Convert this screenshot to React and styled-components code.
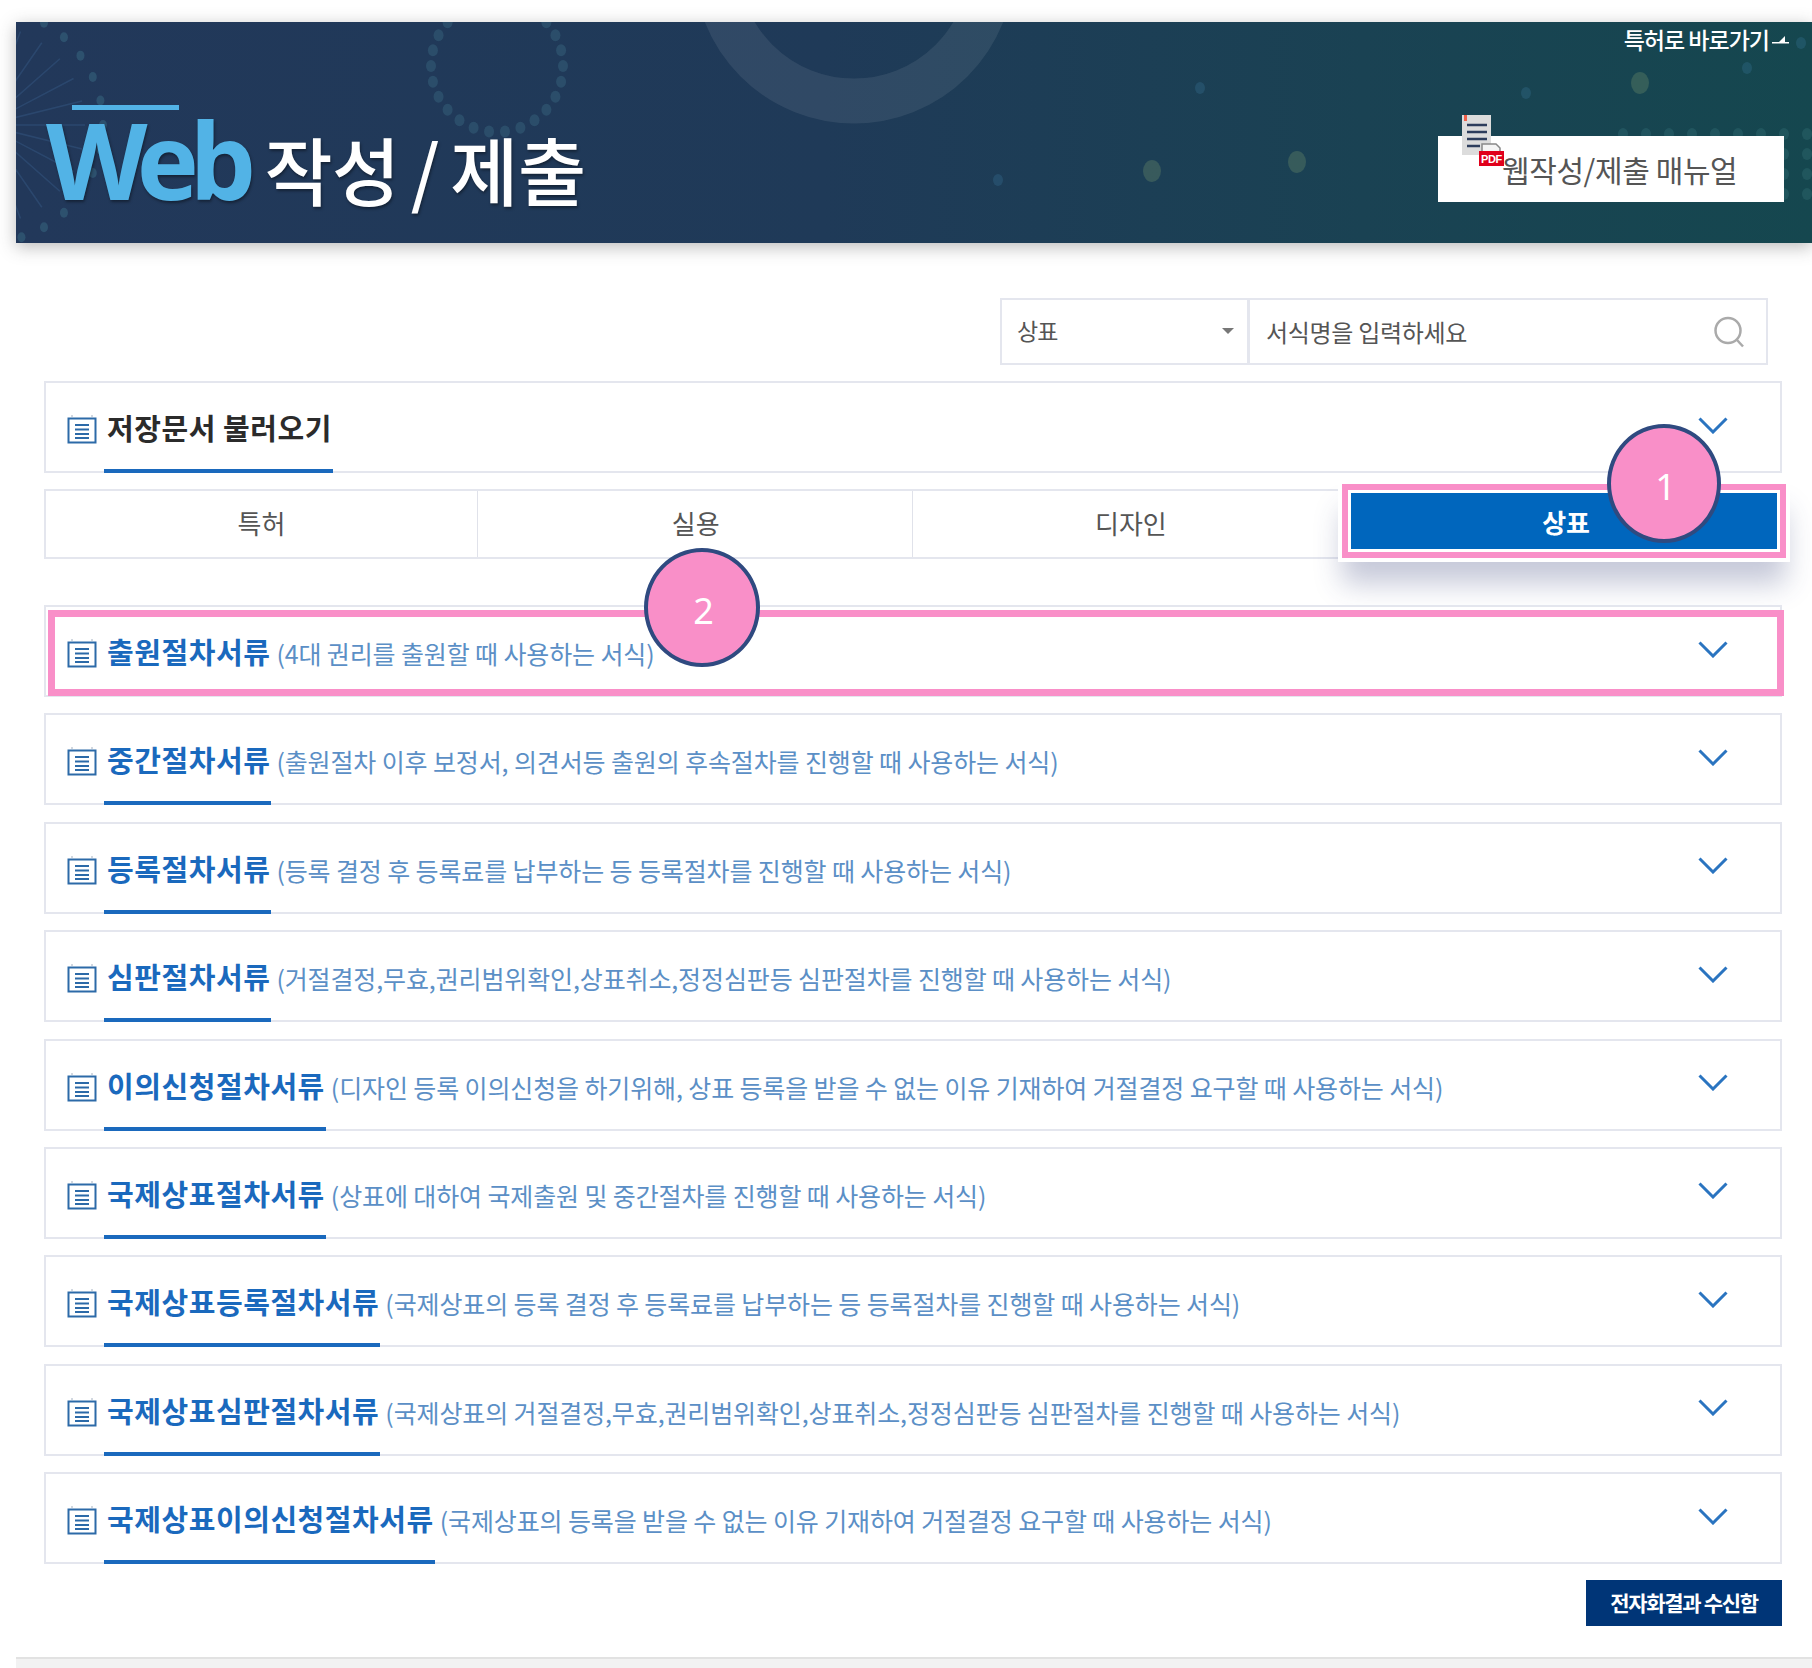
import React from 'react'
import styled, { createGlobalStyle } from 'styled-components'

const Global = createGlobalStyle`
  html, body {
    margin: 0;
    padding: 0;
    background: #fff;
  }
  body {
    font-family: "Noto Sans CJK KR", "Noto Sans", sans-serif;
  }
`

const Page = styled.div`
  width: 1812px;
  height: 1668px;
  padding: 22px 0 0 16px;
  box-sizing: border-box;
  overflow: hidden;
  display: flex;
  flex-direction: column;
`

const Banner = styled.header`
  position: relative;
  height: 221px;
  flex: none;
  background: linear-gradient(90deg, #22385a 0%, #1f3a58 45%, #1a4253 75%, #15474f 100%);
  box-shadow: 0 4px 16px rgba(60, 60, 60, 0.35);
  overflow: hidden;
  display: flex;
  justify-content: space-between;
`

const Decor = styled.svg`
  position: absolute;
  left: 0;
  top: 0;
`

const Heading = styled.h1`
  position: relative;
  margin: 83px 0 0 30px;
  display: flex;
  align-items: baseline;
  height: 110px;
  font-weight: 500;
  line-height: 110px;

  &::before {
    content: "";
    position: absolute;
    left: 26px;
    top: 0;
    width: 107px;
    height: 5px;
    background: #52b3e6;
  }
`

const Web = styled.span`
  font-family: "Noto Sans", sans-serif;
  font-size: 105px;
  font-weight: 700;
  letter-spacing: -9px;
  color: #52b3e6;
  text-shadow: 1px 2px 3px rgba(0, 0, 0, 0.4);
`

const HeadingText = styled.span`
  margin-left: 17px;
  font-size: 74px;
  font-weight: 500;
  letter-spacing: -0.5px;
  word-spacing: -5px;
  color: #fff;
  text-shadow: 1px 2px 3px rgba(0, 0, 0, 0.4);
`

const BannerSide = styled.div`
  position: relative;
  width: 346px;
  margin-right: 28px;
  display: flex;
  flex-direction: column;
  align-items: flex-end;
`

const PatentLink = styled.a`
  display: flex;
  align-items: center;
  gap: 3px;
  margin: 2px -6px 2px 0;
  height: 30px;
  font-size: 23px;
  font-weight: 500;
  letter-spacing: -1px;
  color: #fff;
`

const ManualButton = styled.a`
  position: relative;
  margin-top: 80px;
  width: 346px;
  height: 66px;
  box-sizing: border-box;
  padding-left: 64px;
  background: #fff;
  display: flex;
  align-items: center;
  font-size: 30px;
  letter-spacing: -0.4px;
  color: #555;
`

const ManualIcon = styled.svg`
  position: absolute;
  left: 24px;
  top: -21px;
`

const Main = styled.main`
  padding: 55px 30px 0 28px;
  display: flex;
  flex-direction: column;
`

const SearchBar = styled.div`
  align-self: flex-end;
  margin-right: 14px;
  width: 768px;
  height: 67px;
  box-sizing: border-box;
  border: 2px solid #e4e6ee;
  display: flex;
  margin-bottom: 16px;
`

const SelectBox = styled.div`
  position: relative;
  width: 248px;
  box-sizing: border-box;
  padding: 0 0 4px 15px;
  border-right: 3px solid #e4e6ee;
  display: flex;
  align-items: center;
  font-size: 23px;
  letter-spacing: -1px;
  color: #555;

  &::after {
    content: "";
    position: absolute;
    right: 13px;
    top: 28px;
    border-left: 6px solid transparent;
    border-right: 6px solid transparent;
    border-top: 6px solid #777;
  }
`

const SearchInput = styled.div`
  flex: 1;
  padding: 0 21px 0 16px;
  display: flex;
  align-items: center;
  justify-content: space-between;
  font-size: 24px;
  letter-spacing: -0.3px;
  color: #555;
`

const Row = styled.div`
  position: relative;
  height: 92px;
  box-sizing: border-box;
  border: 2px solid #e4e6ee;
  padding: 0 52px 0 21px;
  display: flex;
  align-items: stretch;
  background: #fff;
`

const DocIcon = styled.svg`
  flex: none;
  align-self: center;
  margin: 4px 7px 0 0;
`

const Title = styled.div`
  flex: none;
  margin-bottom: -2px;
  padding: 2px 1px 0 3px;
  border-bottom: 4px solid ${(p) => (p.$plain ? 'transparent' : '#1a69bd')};
  display: flex;
  align-items: center;
  font-size: 29px;
  font-weight: 700;
  letter-spacing: 0.55px;
  color: ${(p) => (p.$dark ? '#2b2b2b' : '#1a69bd')};
`

const Desc = styled.div`
  margin-left: 5px;
  padding-top: 4px;
  display: flex;
  align-items: center;
  font-size: 25px;
  letter-spacing: -0.12px;
  color: #5b8fc6;
`

const Chevron = styled.svg`
  margin: 0 0 4px auto;
  align-self: center;
  flex: none;
`

const Tabs = styled.div`
  position: relative;
  margin-top: 16px;
  height: 70px;
  box-sizing: border-box;
  border: 2px solid #e4e6ee;
  display: grid;
  grid-template-columns: 432px 434.5px 1fr 1fr;
`

const Tab = styled.div`
  position: relative;
  padding: 0 0 4px ${(p) => p.$shift || 0}px;
  display: flex;
  align-items: center;
  justify-content: center;
  font-size: 26px;
  letter-spacing: 0;
  color: #555;
  border-right: ${(p) => (p.$last ? '0' : '1px solid #e0e2ea')};
`

const ActiveTab = styled.div`
  position: absolute;
  top: -7px;
  right: -6px;
  bottom: -1px;
  left: -4px;
  box-sizing: border-box;
  border: 6px solid #f98fc8;
  outline: 4px solid #fff;
  background: #fff;
  box-shadow: 0 26px 28px rgba(50, 60, 120, 0.28);
  padding: 3px;
  display: flex;
`

const ActiveFill = styled.div`
  flex: 1;
  padding-left: 4px;
  background: #0066bd;
  color: #fff;
  font-weight: 700;
  display: flex;
  align-items: center;
  justify-content: center;
  font-size: 26px;
`

const List = styled.div`
  margin-top: 46px;
  display: flex;
  flex-direction: column;
  gap: 16.4px;
`

const RowHighlight = styled.div`
  position: absolute;
  top: 3px;
  right: -4px;
  bottom: -1px;
  left: 2px;
  border: 7px solid #f98fc8;
`

const Badge = styled.div`
  position: absolute;
  width: ${(p) => p.$w}px;
  height: 119px;
  box-sizing: border-box;
  padding: 5px 0 0 3px;
  border: 4px solid #2f4a80;
  border-radius: 50%;
  background: #f98fc8;
  color: #fff;
  font-family: "Noto Sans", sans-serif;
  font-size: 36px;
  display: flex;
  align-items: center;
  justify-content: center;
  z-index: 2;
`

const Badge1 = styled(Badge)`
  top: -67px;
  right: 59px;
`

const Badge2 = styled(Badge)`
  top: -59px;
  left: 598px;
`

const Actions = styled.div`
  margin-top: 16px;
  display: flex;
  justify-content: flex-end;
`

const ResultButton = styled.button`
  width: 196px;
  height: 46px;
  border: 0;
  padding: 0 0 2px;
  background: #003577;
  color: #fff;
  font-family: inherit;
  font-size: 21px;
  font-weight: 700;
  letter-spacing: -1.3px;
`

const Footer = styled.footer`
  margin-top: 31px;
  height: 11px;
  flex: none;
  background: #f2f2f2;
  border-top: 2px solid #e2e2e2;
`

const forms = [
  ['출원절차서류', '(4대 권리를 출원할 때 사용하는 서식)'],
  ['중간절차서류', '(출원절차 이후 보정서, 의견서등 출원의 후속절차를 진행할 때 사용하는 서식)'],
  ['등록절차서류', '(등록 결정 후 등록료를 납부하는 등 등록절차를 진행할 때 사용하는 서식)'],
  ['심판절차서류', '(거절결정,무효,권리범위확인,상표취소,정정심판등 심판절차를 진행할 때 사용하는 서식)'],
  ['이의신청절차서류', '(디자인 등록 이의신청을 하기위해, 상표 등록을 받을 수 없는 이유 기재하여 거절결정 요구할 때 사용하는 서식)'],
  ['국제상표절차서류', '(상표에 대하여 국제출원 및 중간절차를 진행할 때 사용하는 서식)'],
  ['국제상표등록절차서류', '(국제상표의 등록 결정 후 등록료를 납부하는 등 등록절차를 진행할 때 사용하는 서식)'],
  ['국제상표심판절차서류', '(국제상표의 거절결정,무효,권리범위확인,상표취소,정정심판등 심판절차를 진행할 때 사용하는 서식)'],
  ['국제상표이의신청절차서류', '(국제상표의 등록을 받을 수 없는 이유 기재하여 거절결정 요구할 때 사용하는 서식)'],
]

const Doc = () => (
  <DocIcon width="30" height="30" viewBox="0 0 30 30" fill="none">
    <path d="M1.5 4.5h27v24h-27z" stroke="#2c6aa8" strokeWidth="2" />
    <path d="M8 11h14M8 15.5h14M8 20h14M8 24h14" stroke="#2c6aa8" strokeWidth="1.8" />
    <path d="M5 1v2M25 1v2" stroke="#c4ccd6" strokeWidth="1.5" />
  </DocIcon>
)

const Down = () => (
  <Chevron width="30" height="17" viewBox="0 0 30 17" fill="none">
    <path d="M1.5 1.5L15 15L28.5 1.5" stroke="#2a74c0" strokeWidth="3" />
  </Chevron>
)

const ring = (cx, cy, r, n) =>
  Array.from({ length: n }, (_, i) => {
    const a = (i / n) * Math.PI * 2
    return [cx + r * Math.cos(a), cy + r * Math.sin(a)]
  })

const BannerDecor = () => (
  <Decor width="1796" height="221" viewBox="0 0 1796 221">
    <circle cx="838" cy="-59" r="138" fill="none" stroke="#fff" strokeOpacity="0.08" strokeWidth="45" />
    {Array.from({ length: 26 }, (_, i) => {
      const a = (i / 26) * Math.PI * 2
      return (
        <line
          key={i}
          x1={-31}
          y1={103}
          x2={-31 + 100 * Math.cos(a)}
          y2={103 + 100 * Math.sin(a)}
          stroke="#3a5f8c"
          strokeOpacity="0.4"
          strokeWidth="1.5"
        />
      )
    })}
    {ring(-31, 103, 118, 30).map(([x, y], i) => (
      <ellipse key={i} cx={x} cy={y} rx="4" ry="5" fill="#4a8ca0" fillOpacity="0.3" />
    ))}
    {ring(481, 44, 66, 26).map(([x, y], i) => (
      <ellipse key={i} cx={x} cy={y} rx="5" ry="6" fill="#4a8ca0" fillOpacity="0.25" />
    ))}
    {[[1184, 66], [1510, 71], [1731, 46], [1785, 21], [982, 158]].map(([x, y], i) => (
      <ellipse key={i} cx={x} cy={y} rx="5" ry="6" fill="#3f7fa8" fillOpacity="0.25" />
    ))}
    {[[1624, 61], [1136, 149], [1281, 140]].map(([x, y], i) => (
      <ellipse key={i} cx={x} cy={y} rx="9" ry="11" fill="#6d8c6a" fillOpacity="0.35" />
    ))}
    {[112, 132, 152, 172].flatMap((y) =>
      [1607, 1630, 1653, 1676, 1699, 1722, 1745, 1768, 1791].map((x) => (
        <ellipse key={x + '-' + y} cx={x} cy={y} rx="5" ry="6" fill="#4a8f90" fillOpacity="0.22" />
      ))
    )}
  </Decor>
)

const App = () => (
  <Page>
    <Global />
    <Banner>
      <BannerDecor />
      <Heading>
        <Web>Web</Web>
        <HeadingText>작성 / 제출</HeadingText>
      </Heading>
      <BannerSide>
        <PatentLink>
          특허로 바로가기
          <svg width="18" height="10" viewBox="0 0 18 10">
            <path d="M0 8h17v1.5H0z" fill="#fff" />
            <path d="M7 8l6-6v6z" fill="#fff" />
          </svg>
        </PatentLink>
        <ManualButton>
          <ManualIcon width="44" height="52" viewBox="0 0 44 52">
            <rect x="0" y="0" width="29" height="40" fill="#dcdcdc" />
            <rect x="2" y="0" width="3" height="6" fill="#f0604a" />
            <path d="M5 10h20M5 17h20M5 24h20M5 31h13" stroke="#2d3d5c" strokeWidth="2.5" />
            <path d="M20 29h14l4 4v17H20z" fill="#f4f4f4" stroke="#888" strokeWidth="1.5" />
            <rect x="17" y="36" width="25" height="15" fill="#e0001b" />
            <text x="29.5" y="48" textAnchor="middle" fontFamily="Liberation Sans, sans-serif" fontSize="11" fontWeight="700" fill="#fff">PDF</text>
          </ManualIcon>
          웹작성/제출 매뉴얼
        </ManualButton>
      </BannerSide>
    </Banner>
    <Main>
      <SearchBar>
        <SelectBox>상표</SelectBox>
        <SearchInput>
          서식명을 입력하세요
          <svg width="32" height="32" viewBox="0 0 32 32" fill="none">
            <circle cx="15" cy="14.5" r="12.5" stroke="#aaa" strokeWidth="2.5" />
            <path d="M24 24l6 6.5" stroke="#aaa" strokeWidth="2.5" />
          </svg>
        </SearchInput>
      </SearchBar>
      <Row>
        <Doc />
        <Title $dark>저장문서 불러오기</Title>
        <Down />
      </Row>
      <Tabs>
        <Tab>특허</Tab>
        <Tab $shift={2}>실용</Tab>
        <Tab $shift={4}>디자인</Tab>
        <Tab $last>
          <ActiveTab>
            <ActiveFill>상표</ActiveFill>
          </ActiveTab>
          <Badge1 $w={114}>1</Badge1>
        </Tab>
      </Tabs>
      <List>
        {forms.map(([title, desc], i) => (
          <Row key={title}>
            <Doc />
            <Title $plain={i === 0}>{title}</Title>
            <Desc>{desc}</Desc>
            <Down />
            {i === 0 && <RowHighlight />}
            {i === 0 && <Badge2 $w={116}>2</Badge2>}
          </Row>
        ))}
      </List>
      <Actions>
        <ResultButton>전자화결과 수신함</ResultButton>
      </Actions>
    </Main>
    <Footer />
  </Page>
)

export default App
